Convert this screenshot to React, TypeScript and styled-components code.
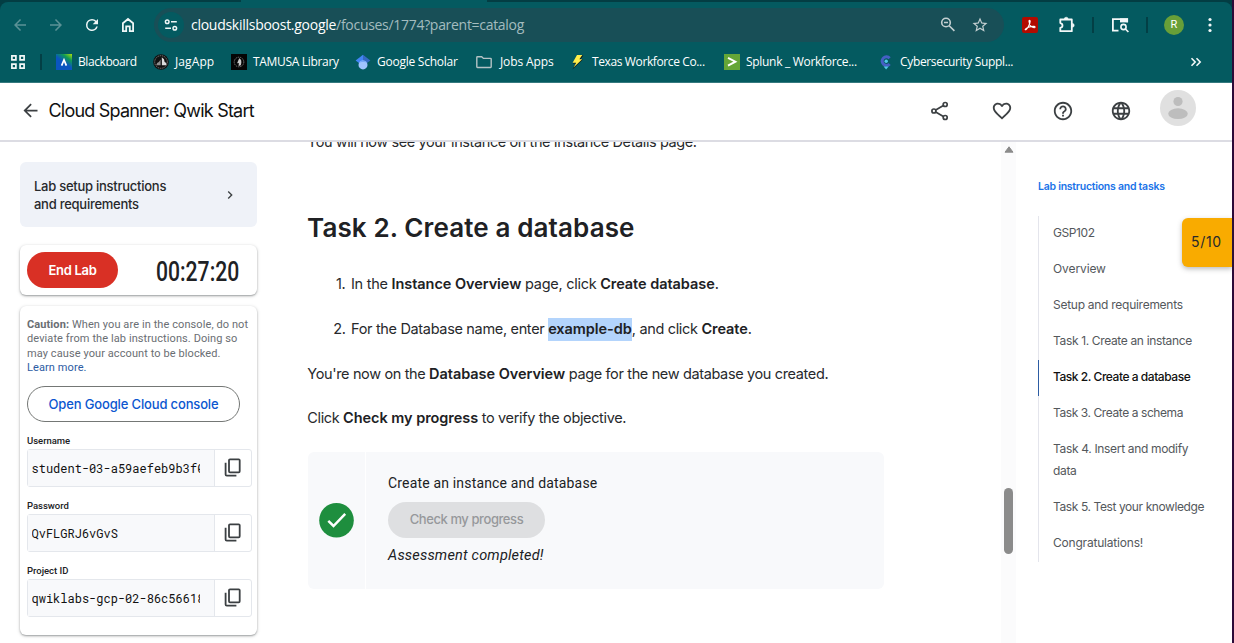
import React from 'react';
import styled, { createGlobalStyle } from 'styled-components';

const GlobalStyle = createGlobalStyle`
  * { box-sizing: border-box; }
  html, body { margin: 0; padding: 0; background: #fff; }
  body { width: 1234px; height: 643px; overflow: hidden; font-family: Inter, "Liberation Sans", sans-serif; }
  p, h1, h2, ol, ul { margin: 0; padding: 0; }
  svg { display: block; flex: none; }
`;

const Window = styled.div`
  width: 1234px;
  height: 643px;
  display: flex;
  flex-direction: column;
  border-right: 2px solid #2c0a38;
  overflow: hidden;
`;

/* ---------- browser chrome ---------- */

const Chrome = styled.div`
  background: #033d43;
  flex: none;
  height: 83px;
`;

const TabStrip = styled.div`
  height: 2px;
  padding-left: 241px;
`;

const ActiveTab = styled.div`
  width: 246px;
  height: 2px;
  background: #045a60;
`;

const ChromeInner = styled.div`
  background: #045a60;
  height: 81px;
  border-radius: 8px 8px 0 0;
  border-bottom: 1px solid #35797e;
`;

const Toolbar = styled.div`
  display: flex;
  align-items: center;
  height: 46px;
`;

const NavButton = styled.div<{ $dim?: boolean }>`
  width: 36px;
  height: 24px;
  display: flex;
  align-items: center;
  justify-content: center;
  color: ${(p) => (p.$dim ? '#5b9296' : '#eef6f6')};
`;

const NavGroup = styled.div`
  display: flex;
  padding: 0 8px 0 2px;
`;

const Omnibox = styled.div`
  width: 850px;
  height: 34px;
  border-radius: 17px;
  background: #184f57;
  display: flex;
  align-items: center;
  padding: 0 15px 0 4px;
`;

const SiteChip = styled.div`
  width: 26px;
  height: 26px;
  border-radius: 50%;
  background: #045a60;
  display: flex;
  align-items: center;
  justify-content: center;
  margin-right: 7px;
`;

const Url = styled.div`
  flex: 1;
  font: 14px/20px "Open Sans", "Noto Sans", sans-serif;
  letter-spacing: -0.27px;
  color: #fff;
  white-space: nowrap;
`;

const UrlPath = styled.span`
  color: #a3bcbf;
  letter-spacing: -0.3px;
`;

const OmniIcons = styled.div`
  display: flex;
  gap: 15px;
`;

const Extensions = styled.div`
  display: flex;
  align-items: center;
  padding-left: 17px;
  color: #f3f8f8;
`;

const ExtSlot = styled.div<{ $w: number; $after?: number }>`
  width: ${(p) => p.$w}px;
  margin-right: ${(p) => p.$after ?? 0}px;
  display: flex;
  justify-content: center;
`;

const Divider = styled.div`
  width: 2px;
  height: 16px;
  background: #033f45;
`;

const Profile = styled.div`
  width: 20px;
  height: 20px;
  border-radius: 50%;
  background: #689f38;
  color: #fff;
  font: 11px/20px Roboto, sans-serif;
  text-align: center;
`;

const Bookmarks = styled.div`
  display: flex;
  align-items: center;
  height: 28px;
  padding-left: 10px;
  color: #f3f8f8;
`;

const BarDivider = styled(Divider)`
  margin: 0 14px 0 14px;
`;

const Bookmark = styled.div<{ $w: number; $gap?: number; $ls?: number }>`
  width: ${(p) => p.$w}px;
  display: flex;
  align-items: center;
  gap: ${(p) => p.$gap ?? 6}px;
  font: 12px/16px "Open Sans", "Noto Sans", sans-serif;
  letter-spacing: ${(p) => p.$ls ?? -0.25}px;
  color: #fff;
  white-space: nowrap;
`;

/* ---------- lab header ---------- */

const Header = styled.header`
  flex: none;
  height: 59px;
  border-bottom: 2px solid #dcdce3;
  display: flex;
  align-items: center;
  padding: 0 36px 2px 20px;
  background: #fff;
  color: #3c4043;
`;

const LabTitle = styled.h1`
  flex: 1;
  font: 400 18px/26px Inter, sans-serif;
  letter-spacing: -0.79px;
  color: #111;
  margin-left: 7.5px;
`;

const HeaderIcon = styled.div<{ $w: number }>`
  width: ${(p) => p.$w}px;
  display: flex;
  justify-content: center;
`;

const Avatar = styled.div`
  width: 36px;
  height: 36px;
  border-radius: 50%;
  background: #e0e0e0;
  margin: -6px 0 0 11px;
  overflow: hidden;
`;

/* ---------- body ---------- */

const Body = styled.div`
  display: flex;
  flex: 1;
  min-height: 0;
  overflow: hidden;
`;

const Sidebar = styled.aside`
  width: 277px;
  flex: none;
  padding: 20px 20px 0;
  display: flex;
  flex-direction: column;
`;

const SetupCard = styled.div`
  height: 65px;
  background: #eff2f8;
  border-radius: 6px;
  display: flex;
  align-items: center;
  justify-content: space-between;
  padding: 0 19px 0 14px;
  font: 500 13px/18px Inter, sans-serif;
  letter-spacing: -0.26px;
  color: #27292c;
`;

const Panel = styled.div`
  background: #fff;
  border-radius: 6px;
  box-shadow: 0 1px 2px rgba(60, 64, 67, 0.45), 0 1px 4px rgba(60, 64, 67, 0.14);
`;

const TimerPanel = styled(Panel)`
  margin-top: 18px;
  height: 50px;
  flex: none;
  display: flex;
  align-items: center;
  padding: 0 7px;
`;

const EndButton = styled.div`
  width: 91px;
  height: 36px;
  border-radius: 18px;
  background: #d93025;
  color: #fff;
  font: 600 13px/36px Inter, sans-serif;
  letter-spacing: -0.3px;
  text-align: center;
`;

const Timer = styled.div`
  margin: 4px 0 0 38px;
  width: 84px;
  font: 500 28px/32px Roboto, sans-serif;
  color: #202124;
  transform: scaleX(0.755);
  transform-origin: 0 50%;
  white-space: nowrap;
`;

const Credentials = styled(Panel)`
  margin-top: 11px;
  height: 329px;
  flex: none;
  padding: 12px 5px 0 7px;
`;

const Caution = styled.p`
  font: 11px/14.4px Roboto, sans-serif;
  letter-spacing: 0.09px;
  color: #6a6e73;
  white-space: nowrap;
`;

const LearnMore = styled.span`
  color: #2d5ca3;
`;

const ConsoleButton = styled.div`
  width: 213px;
  height: 36px;
  margin: 10px 0 0;
  border: 1px solid #747775;
  border-radius: 18px;
  font: 500 13px/34px Inter, sans-serif;
  letter-spacing: -0.15px;
  color: #0b57d0;
  text-align: center;
`;

const FieldLabel = styled.div`
  padding: 12px 0 1px;
  font: 500 9.5px/14px Roboto, sans-serif;
  letter-spacing: -0.02px;
  color: #202124;
`;

const Field = styled.div`
  width: 225px;
  height: 38px;
  border: 1px solid #e4e7ec;
  border-radius: 3px;
  display: flex;
  color: #3c4043;
`;

const FieldValue = styled.div`
  width: 187px;
  padding: 0 14px 0 3.5px;
  background: #f8f9fb;
  border-right: 1px solid #e4e7ec;
`;

const FieldText = styled.div`
  overflow: hidden;
  white-space: nowrap;
  font: 12px/37px "Roboto Mono", "DejaVu Sans Mono", monospace;
  color: #111;
`;

const CopyCell = styled.div`
  flex: 1;
  display: flex;
  justify-content: center;
  padding: 8px 2px 0 0;
`;

const FieldGroup = styled.div`
  height: 65px;
`;

const Content = styled.main`
  width: 724px;
  flex: none;
  padding-left: 31px;
  overflow: hidden;
  color: #202124;
`;

const Para = styled.p<{ $top: number; $ls?: number }>`
  margin-top: ${(p) => p.$top}px;
  margin-left: -0.7px;
  font: 14.5px/24px Inter, sans-serif;
  letter-spacing: ${(p) => p.$ls ?? -0.36}px;
  white-space: nowrap;
  color: #27292c;
`;

const B = styled.b`
  font-weight: 600;
  letter-spacing: -0.05px;
  color: #202124;
`;

const Heading = styled.h2`
  margin: 56px 0 0 -1px;
  font: 600 26px/36px Inter, sans-serif;
  letter-spacing: 0.12px;
`;

const Step = styled(Para)`
  display: flex;
  margin-left: 0;
  white-space: pre;
`;

const StepNumber = styled.span`
  width: 43px;
  padding-right: 5.5px;
  text-align: right;
`;

const Marked = styled(B)`
  background: #b3d4fc;
  display: inline-block;
  height: 23px;
  margin-top: 1px;
  line-height: 22px;
`;

const CheckCard = styled.div`
  margin-top: 22px;
  width: 576px;
  height: 137px;
  border-radius: 6px;
  background: #f8f9fb;
  display: flex;
`;

const CheckMark = styled.div`
  width: 58px;
  border-right: 1px solid #fff;
  display: flex;
  align-items: center;
  justify-content: center;
`;

const CheckBody = styled.div`
  padding: 21px 0 0 22px;
`;

const CheckTitle = styled.div`
  font: 14px/20px Roboto, sans-serif;
  letter-spacing: 0.17px;
`;

const CheckButton = styled.div`
  width: 157px;
  height: 36px;
  margin: 9px 0 8px;
  border-radius: 18px;
  background: #dedfe1;
  color: #96989b;
  font: 500 13px/35px Inter, sans-serif;
  letter-spacing: -0.42px;
  text-align: center;
`;

const CheckStatus = styled.div`
  font: italic 14.5px/20px Roboto, sans-serif;
  letter-spacing: 0.2px;
`;

const ScrollTrack = styled.div`
  width: 15px;
  flex: none;
  background: #fbfbfc;
  display: flex;
  flex-direction: column;
  align-items: center;
  padding-top: 4px;
`;

const ScrollThumb = styled.div`
  width: 9px;
  height: 66px;
  margin-top: 335px;
  border-radius: 5px;
  background: #8b8b8b;
`;

const Toc = styled.nav`
  width: 216px;
  flex: none;
  padding: 35px 0 0 22px;
`;

const TocTitle = styled.div`
  font: 600 10.5px/20px Inter, sans-serif;
  letter-spacing: -0.25px;
  color: #1a73e8;
`;

const TocList = styled.ul`
  list-style: none;
  margin-top: 19px;
`;

const TocItem = styled.li<{ $active?: boolean; $ls?: number }>`
  border-left: 1px solid ${(p) => (p.$active ? '#2d5ca3' : '#e4e5ec')};
  padding: 6px 24px 8px 14px;
  font: ${(p) => (p.$active ? 500 : 400)} 12px/22px Inter, sans-serif;
  letter-spacing: ${(p) => p.$ls ?? -0.3}px;
  color: ${(p) => (p.$active ? '#111' : '#54585c')};
`;

const ScoreBadge = styled.div`
  position: absolute;
  left: 1182px;
  top: 218px;
  width: 50px;
  height: 49px;
  border-radius: 6px 0 0 6px;
  background: #f9ab00;
  box-shadow: 0 2px 5px rgba(60, 64, 67, 0.35);
  font: 14px/48px Inter, sans-serif;
  letter-spacing: 0.7px;
  color: #27292c;
  padding-left: 9px;
`;

/* ---------- icons ---------- */

const Material = ({ d, size, color = 'currentColor' }: { d: string; size: number; color?: string }) => (
  <svg width={size} height={size} viewBox="0 0 24 24" fill={color}>
    <path d={d} />
  </svg>
);

const BACK = 'M20 11H7.83l5.59-5.59L12 4l-8 8 8 8 1.41-1.41L7.83 13H20v-2z';
const FORWARD = 'M4 11h12.17l-5.59-5.59L12 4l8 8-8 8-1.41-1.41L16.17 13H4v-2z';
const RELOAD =
  'M17.65 6.35A7.96 7.96 0 0 0 12 4a8 8 0 1 0 7.73 10h-2.08A6 6 0 1 1 12 6c1.66 0 3.14.69 4.22 1.78L13 11h7V4l-2.35 2.35z';
const STAR =
  'M22 9.24l-7.19-.62L12 2 9.19 8.63 2 9.24l5.46 4.73L5.82 21 12 17.27 18.18 21l-1.63-7.03L22 9.24zM12 15.4l-3.76 2.27 1-4.28-3.32-2.88 4.38-.38L12 6.1l1.71 4.04 4.38.38-3.32 2.88 1 4.28L12 15.4z';
const HEART =
  'M16.5 3c-1.74 0-3.41.81-4.5 2.09C10.91 3.81 9.24 3 7.5 3 4.42 3 2 5.42 2 8.5c0 3.78 3.4 6.86 8.55 11.54L12 21.35l1.45-1.32C18.6 15.36 22 12.28 22 8.5 22 5.42 19.58 3 16.5 3zm-4.4 15.55l-.1.1-.1-.1C7.14 14.24 4 11.39 4 8.5 4 6.5 5.5 5 7.5 5c1.54 0 3.04.99 3.57 2.36h1.87C13.46 5.99 14.96 5 16.5 5c2 0 3.5 1.5 3.5 3.5 0 2.89-3.14 5.74-7.9 10.05z';
const HELP =
  'M11 18h2v-2h-2v2zm1-16C6.48 2 2 6.48 2 12s4.48 10 10 10 10-4.48 10-10S17.52 2 12 2zm0 18c-4.41 0-8-3.59-8-8s3.59-8 8-8 8 3.59 8 8-3.59 8-8 8zm0-14c-2.21 0-4 1.79-4 4h2c0-1.1.9-2 2-2s2 .9 2 2c0 2-3 1.75-3 5h2c0-2.25 3-2.5 3-5 0-2.21-1.79-4-4-4z';
const GLOBE =
  'M11.99 2C6.47 2 2 6.48 2 12s4.47 10 9.99 10C17.52 22 22 17.52 22 12S17.52 2 11.99 2zm6.93 6h-2.95a15.65 15.65 0 0 0-1.38-3.56A8.03 8.03 0 0 1 18.92 8zM12 4.04c.83 1.2 1.48 2.53 1.91 3.96h-3.82c.43-1.43 1.08-2.76 1.91-3.96zM4.26 14C4.1 13.36 4 12.69 4 12s.1-1.36.26-2h3.38c-.08.66-.14 1.32-.14 2s.06 1.34.14 2H4.26zm.82 2h2.95c.32 1.25.78 2.45 1.38 3.56A7.99 7.99 0 0 1 5.08 16zm2.95-8H5.08a7.99 7.99 0 0 1 4.33-3.56A15.65 15.65 0 0 0 8.03 8zM12 19.96c-.83-1.2-1.48-2.53-1.91-3.96h3.82c-.43 1.43-1.08 2.76-1.91 3.96zM14.34 14H9.66c-.09-.66-.16-1.32-.16-2s.07-1.35.16-2h4.68c.09.65.16 1.32.16 2s-.07 1.34-.16 2zm.25 5.56c.6-1.11 1.06-2.31 1.38-3.56h2.95a8.03 8.03 0 0 1-4.33 3.56zM16.36 14c.08-.66.14-1.32.14-2s-.06-1.34-.14-2h3.38c.16.64.26 1.31.26 2s-.1 1.36-.26 2h-3.38z';
const CHEVRON = 'M10 6L8.59 7.41 13.17 12l-4.58 4.59L10 18l6-6z';

const HomeIcon = () => (
  <svg width="16" height="16" viewBox="0 0 16 16" fill="none" stroke="currentColor" strokeWidth="1.8">
    <path d="M2.9 6.2 8 2l5.1 4.2v7.9H9.8V9.4H6.2v4.7H2.9z" />
  </svg>
);

const TuneIcon = () => (
  <svg width="14" height="14" viewBox="0 0 14 14" fill="none" stroke="#eef6f6" strokeWidth="1.5">
    <circle cx="3.2" cy="3.7" r="1.8" />
    <path d="M7 3.7h5.8M1.2 10.3H7" />
    <circle cx="10.8" cy="10.3" r="1.8" />
  </svg>
);

const ZoomOutIcon = () => (
  <svg width="16" height="16" viewBox="0 0 16 16" fill="none" stroke="#c3cfd1" strokeWidth="1.6">
    <circle cx="6" cy="6.5" r="4.3" />
    <path d="M9.2 9.7l5.2 5.2M4 6.5h4" />
  </svg>
);

const PdfIcon = () => (
  <svg width="16" height="16" viewBox="0 0 16 16">
    <rect width="16" height="16" rx="2" fill="#b30b00" />
    <path
      d="M3.2 12.4c.6-1.6 5-3.3 9-3 1.3.2 1 1.4-.1 1.3C9.6 10.4 7.3 8 7 4.3c-.1-1.5 1.2-1.5 1.2 0C8.1 7 5.3 12.1 3.9 12.7c-.4.2-.8.1-.7-.3z"
      fill="none"
      stroke="#fff"
      strokeWidth="1.1"
    />
  </svg>
);

const PuzzleIcon = () => (
  <svg width="18" height="18" viewBox="0 0 18 18" fill="none" stroke="currentColor" strokeWidth="1.8" strokeLinejoin="round">
    <path d="M2.3 3.5h11.5v11.7H2.3v-3.4c2.9-.5 2.9-4.2 0-4.7z" />
    <path d="M6.3 3.1a1.9 1.9 0 0 1 3.8 0zM14.3 7.4a1.9 1.9 0 0 1 0 3.8z" fill="currentColor" strokeWidth=".6" />
  </svg>
);

const SideSearchIcon = () => (
  <svg width="18" height="16" viewBox="0 0 18 16" fill="none" stroke="currentColor">
    <path d="M7.5 13.6H1.9V2.2h14.3v3" strokeWidth="1.8" />
    <path d="M9 1.4h8v4H9z" fill="currentColor" stroke="none" />
    <circle cx="12.5" cy="10" r="2.6" strokeWidth="1.6" />
    <path d="M14.4 12l3 3" strokeWidth="1.7" />
  </svg>
);

const MoreIcon = () => (
  <svg width="4" height="16" viewBox="0 0 4 16" fill="currentColor">
    <circle cx="2" cy="2.5" r="1.6" />
    <circle cx="2" cy="8" r="1.6" />
    <circle cx="2" cy="13.5" r="1.6" />
  </svg>
);

const AppsIcon = () => (
  <svg width="16" height="16" viewBox="0 0 16 16" fill="none" stroke="currentColor" strokeWidth="1.7">
    <path d="M1.9 1.9h4v4h-4zM10.1 1.9h4v4h-4zM1.9 10.1h4v4h-4zM10.1 10.1h4v4h-4z" />
  </svg>
);

const BlackboardIcon = () => (
  <svg width="16" height="16" viewBox="0 0 16 16">
    <defs>
      <linearGradient id="bb" x1="0.95" y1="0" x2="0.4" y2="0.75">
        <stop offset="0" stopColor="#a5dc10" />
        <stop offset=".35" stopColor="#0e9a55" />
        <stop offset=".75" stopColor="#0a55c0" />
      </linearGradient>
    </defs>
    <path d="M0 0h16v16H0z" fill="url(#bb)" />
    <path d="M5.6 11.7 8 6l2.4 5.7" fill="none" stroke="#fff" strokeWidth="1.7" />
  </svg>
);

const SealIcon = ({ square }: { square?: boolean }) => (
  <svg width="16" height="16" viewBox="0 0 16 16">
    {square ? <path d="M0 0h16v16H0z" fill="#050505" /> : <circle cx="8" cy="8" r="7.8" fill="#111" />}
    <circle cx="8" cy="8" r={square ? 4.8 : 6.3} fill="none" stroke="#8a8a8a" strokeWidth=".8" strokeDasharray="1.5 .8" />
    {square ? (
      <path d="M8.2 4.2c2.2 1 2.8 3.4 1.6 7L7.6 12l.2-3-1.7.3z" fill="#c8c8c8" />
    ) : (
      <>
        <path d="M8.800 3.300l2.200 2 .6 2.600 1.700 1.200v2.200H8.900V8.800z" fill="#dcdcdc" />
        <path d="M7.600 5.500v5.800H3.200l.9-2.400 1.800-1z" fill="#8f8f8f" />
      </>
    )}
  </svg>
);

const ScholarIcon = () => (
  <svg width="16" height="16" viewBox="0 0 16 16">
    <path d="M8 .8 .6 6.500 8 12z" fill="#4285f4" />
    <path d="M8 .8l7.400 5.700L8 12z" fill="#356ac3" />
    <circle cx="8" cy="10.900" r="4.500" fill="#a0c3ff" />
    <path d="M3.900 9a4.600 4.600 0 0 1 8.200 0C10.500 7.600 5.500 7.600 3.900 9z" fill="#76a7fa" />
  </svg>
);

const FolderIcon = () => (
  <svg width="16" height="14" viewBox="0 0 16 14" fill="none" stroke="#b4c3c5" strokeWidth="1.4">
    <path d="M1.5 1.7h4.2l1.7 1.7h7.1q.7 0 .7.7v7.7q0 .7-.7.7h-13q-.7 0-.7-.7V2.4q0-.7.7-.7z" />
  </svg>
);

const BoltIcon = () => (
  <svg width="16" height="16" viewBox="0 0 16 16">
    <path d="M7.500 1.400h5.800L10.200 5.500h2.600L2.400 15.500l3.400-6H2.800z" fill="#111" />
    <path d="M7 .9h5.300L9.400 5.300h2.800L3.600 13.400l2.600-4.600H2.600z" fill="#ffee4a" />
  </svg>
);

const SplunkIcon = () => (
  <svg width="16" height="16" viewBox="0 0 16 16">
    <path d="M0 0h16v16H0z" fill="#65a637" />
    <path d="M4 3.8l7.4 3.9L4 11.6" fill="none" stroke="#fff" strokeWidth="1.9" />
  </svg>
);

const CyberIcon = () => (
  <svg width="16" height="16" viewBox="0 0 16 16">
    <path d="M11.600 4.200A4.300 4.300 0 1 0 11.600 10" fill="none" stroke="#4560c4" strokeWidth="3" />
    <circle cx="8.200" cy="7.300" r="1.700" fill="#52c7e8" />
    <path d="M5.600 12.600h5l-2.500 2.800z" fill="#52c7e8" />
  </svg>
);

const OverflowIcon = () => (
  <svg width="12" height="10" viewBox="0 0 12 10" fill="none" stroke="currentColor" strokeWidth="1.6">
    <path d="M1.5 1.2 5.2 5 1.5 8.8M6.5 1.2 10.2 5 6.5 8.8" />
  </svg>
);

const ShareIcon = () => (
  <svg width="20" height="20" viewBox="0 0 20 20" fill="none" stroke="#3c4043" strokeWidth="1.7">
    <circle cx="3.9" cy="10" r="2" />
    <circle cx="15.2" cy="3.5" r="2" />
    <circle cx="15.2" cy="16.5" r="2" />
    <path d="M5.7 9l7.7-4.5M5.7 11l7.7 4.5" />
  </svg>
);

const CopyIcon = () => (
  <svg width="17" height="19" viewBox="0 0 17 19" fill="none" stroke="currentColor" strokeWidth="1.8">
    <rect x="5" y="1.3" width="10.7" height="13" rx="1" />
    <path d="M1.6 4.8v11.7q0 1.2 1.2 1.2h9.6" />
  </svg>
);

const PersonIcon = () => (
  <svg width="36" height="36" viewBox="0 0 36 36" fill="#bdbdbd">
    <circle cx="18" cy="11.5" r="4.6" />
    <ellipse cx="18" cy="23.7" rx="9.8" ry="5.4" />
  </svg>
);

const DoneIcon = () => (
  <svg width="35" height="35" viewBox="0 0 35 35">
    <circle cx="17.5" cy="17.3" r="17.3" fill="#1e8e3e" />
    <path d="M9.3 17.9l5.2 5.1L26.2 10.8" fill="none" stroke="#fff" strokeWidth="2.5" />
  </svg>
);

const ArrowUp = () => (
  <svg width="10" height="7" viewBox="0 0 10 7">
    <path d="M5 .8 9 6.2H1z" fill="#8b8b8b" stroke="#8b8b8b" strokeWidth="1" strokeLinejoin="round" />
  </svg>
);

/* ---------- page ---------- */

const credentials = [
  { label: 'Username', value: 'student-03-a59aefeb9b3f0' },
  { label: 'Password', value: 'QvFLGRJ6vGvS' },
  { label: 'Project ID', value: 'qwiklabs-gcp-02-86c56618' },
];

const sections = [
  { title: 'GSP102', ls: -0.4 },
  { title: 'Overview', ls: -0.1 },
  { title: 'Setup and requirements', ls: -0.27 },
  { title: 'Task 1. Create an instance', ls: -0.35 },
  { title: 'Task 2. Create a database', ls: -0.46, active: true },
  { title: 'Task 3. Create a schema', ls: -0.42 },
  { title: 'Task 4. Insert and modify data', ls: -0.33 },
  { title: 'Task 5. Test your knowledge', ls: -0.4 },
  { title: 'Congratulations!', ls: -0.2 },
];

export default function App() {
  return (
    <Window>
      <GlobalStyle />
      <Chrome>
        <TabStrip><ActiveTab /></TabStrip>
        <ChromeInner>
          <Toolbar>
            <NavGroup>
              <NavButton $dim><Material d={BACK} size={18} /></NavButton>
              <NavButton $dim><Material d={FORWARD} size={18} /></NavButton>
              <NavButton><Material d={RELOAD} size={18} /></NavButton>
              <NavButton><HomeIcon /></NavButton>
            </NavGroup>
            <Omnibox>
              <SiteChip><TuneIcon /></SiteChip>
              <Url>cloudskillsboost.google<UrlPath>/focuses/1774?parent=catalog</UrlPath></Url>
              <OmniIcons>
                <ZoomOutIcon />
                <Material d={STAR} size={18} color="#c3cfd1" />
              </OmniIcons>
            </Omnibox>
            <Extensions>
              <ExtSlot $w={18} $after={3}><PdfIcon /></ExtSlot>
              <ExtSlot $w={50}><PuzzleIcon /></ExtSlot>
              <Divider />
              <ExtSlot $w={52}><SideSearchIcon /></ExtSlot>
              <Divider />
              <ExtSlot $w={52}><Profile>R</Profile></ExtSlot>
              <ExtSlot $w={20}><MoreIcon /></ExtSlot>
            </Extensions>
          </Toolbar>
          <Bookmarks>
            <AppsIcon />
            <BarDivider />
            <Bookmark $w={97} $ls={-0.42}><BlackboardIcon />Blackboard</Bookmark>
            <Bookmark $w={78} $ls={0.1}><SealIcon />JagApp</Bookmark>
            <Bookmark $w={124} $ls={-0.32}><SealIcon square />TAMUSA Library</Bookmark>
            <Bookmark $w={121}><ScholarIcon />Google Scholar</Bookmark>
            <Bookmark $w={94} $gap={8} $ls={-0.1}><FolderIcon />Jobs Apps</Bookmark>
            <Bookmark $w={154} $ls={-0.38}><BoltIcon />Texas Workforce Co...</Bookmark>
            <Bookmark $w={154} $ls={-0.3}><SplunkIcon />Splunk _ Workforce...</Bookmark>
            <Bookmark $w={312} $ls={-0.34}><CyberIcon />Cybersecurity Suppl...</Bookmark>
            <OverflowIcon />
          </Bookmarks>
        </ChromeInner>
      </Chrome>

      <Header>
        <Material d={BACK} size={21} />
        <LabTitle>Cloud Spanner: Qwik Start</LabTitle>
        <HeaderIcon $w={62}><ShareIcon /></HeaderIcon>
        <HeaderIcon $w={62}><Material d={HEART} size={22} /></HeaderIcon>
        <HeaderIcon $w={60}><Material d={HELP} size={22} /></HeaderIcon>
        <HeaderIcon $w={56}><Material d={GLOBE} size={22} /></HeaderIcon>
        <Avatar><PersonIcon /></Avatar>
      </Header>

      <Body>
        <Sidebar>
          <SetupCard>
            <div>Lab setup instructions<br />and requirements</div>
            <Material d={CHEVRON} size={16} color="#3c4043" />
          </SetupCard>
          <TimerPanel>
            <EndButton>End Lab</EndButton>
            <Timer>00:27:20</Timer>
          </TimerPanel>
          <Credentials>
            <Caution>
              <b>Caution:</b> When you are in the console, do not<br />
              deviate from the lab instructions. Doing so<br />
              may cause your account to be blocked.<br />
              <LearnMore>Learn more.</LearnMore>
            </Caution>
            <ConsoleButton>Open Google Cloud console</ConsoleButton>
            {credentials.map((c) => (
              <FieldGroup key={c.label}>
                <FieldLabel>{c.label}</FieldLabel>
                <Field>
                  <FieldValue><FieldText>{c.value}</FieldText></FieldValue>
                  <CopyCell><CopyIcon /></CopyCell>
                </Field>
              </FieldGroup>
            ))}
          </Credentials>
        </Sidebar>

        <Content>
          <Para $top={-12} $ls={-0.41}>You will now see your instance on the Instance Details page.</Para>
          <Heading>Task 2. Create a database</Heading>
          <Step as="div" $top={26} $ls={-0.28}>
            <StepNumber>1.</StepNumber>
            <span>In the <B>Instance Overview</B> page, click <B>Create database</B>.</span>
          </Step>
          <Step as="div" $top={21} $ls={-0.33}>
            <StepNumber>2.</StepNumber>
            <span>For the Database name, enter <Marked>example-db</Marked>, and click <B>Create</B>.</span>
          </Step>
          <Para $top={21}>You're now on the <B>Database Overview</B> page for the new database you created.</Para>
          <Para $top={20}>Click <B>Check my progress</B> to verify the objective.</Para>
          <CheckCard>
            <CheckMark><DoneIcon /></CheckMark>
            <CheckBody>
              <CheckTitle>Create an instance and database</CheckTitle>
              <CheckButton>Check my progress</CheckButton>
              <CheckStatus>Assessment completed!</CheckStatus>
            </CheckBody>
          </CheckCard>
        </Content>

        <ScrollTrack>
          <ArrowUp />
          <ScrollThumb />
        </ScrollTrack>

        <Toc>
          <TocTitle>Lab instructions and tasks</TocTitle>
          <TocList>
            {sections.map((s) => (
              <TocItem key={s.title} $active={s.active} $ls={s.ls}>{s.title}</TocItem>
            ))}
          </TocList>
        </Toc>
      </Body>
      <ScoreBadge>5/10</ScoreBadge>
    </Window>
  );
}
